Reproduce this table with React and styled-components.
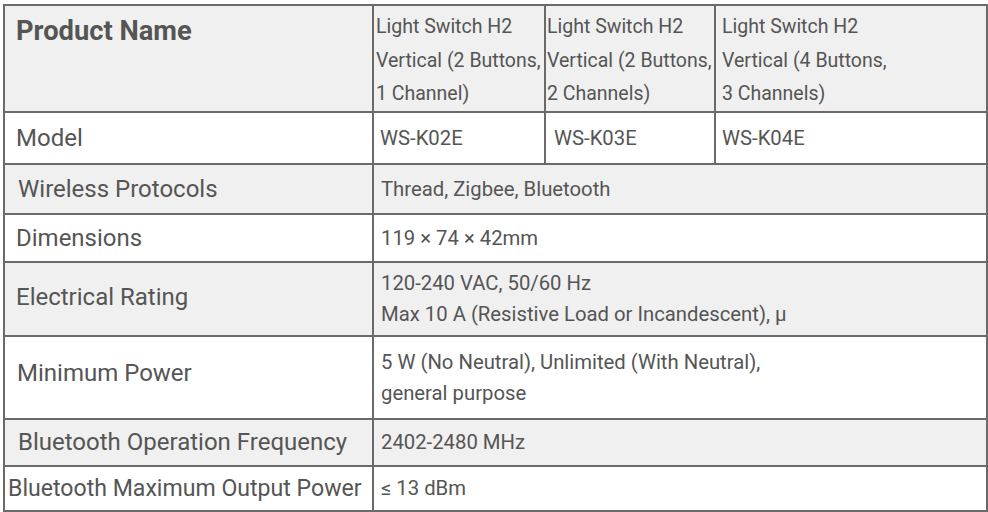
import React from "react";
import styled, { createGlobalStyle } from "styled-components";

const Global = createGlobalStyle`
  html, body { margin: 0; padding: 0; background: #ffffff; }
  body { font-family: "Roboto", "Lato", sans-serif; color: #555555; }
`;

const Page = styled.div`
  padding: 4px 2px 0 3px;
`;

const Table = styled.table`
  width: 983px;
  border-collapse: collapse;
  table-layout: fixed;
  color: #555555;
`;

const Row = styled.tr`
  height: ${(p) => p.$h}px;
  background: ${(p) => (p.$shade ? "#f0f0f0" : "#ffffff")};
`;

const Cell = styled.td`
  border: 2px solid #6a6a6a;
  padding: ${(p) => p.$pt ?? 0}px 0 ${(p) => p.$pb ?? 0}px ${(p) => p.$pl ?? 8}px;
  vertical-align: ${(p) => (p.$top ? "top" : "middle")};
  font-size: ${(p) => p.$fs ?? 20.3}px;
  line-height: ${(p) => p.$lh ?? 31}px;
  font-weight: ${(p) => (p.$bold ? 700 : 400)};
  white-space: nowrap;
`;

const header = [
  { lines: ["Light Switch H2", "Vertical (2 Buttons,", "1 Channel)"], pl: 2 },
  { lines: ["Light Switch H2", "Vertical (2 Buttons,", "2 Channels)"], pl: 1 },
  { lines: ["Light Switch H2", "Vertical (4 Buttons,", "3 Channels)"], pl: 6 },
];

const rows = [
  { label: "Model", h: 52, pl: 11, values: [["WS-K02E", 6], ["WS-K03E", 8], ["WS-K04E", 6]] },
  { label: "Wireless Protocols", h: 50, pl: 13, shade: true, span: ["Thread, Zigbee, Bluetooth", 7] },
  { label: "Dimensions", h: 48, pl: 11, span: ["119 × 74 × 42mm", 7] },
  {
    label: "Electrical Rating", h: 74, pl: 11, lpb: 4, shade: true,
    span: [["120-240 VAC, 50/60 Hz", "Max 10 A (Resistive Load or Incandescent), µ"], 7],
  },
  {
    label: "Minimum Power", h: 83, pl: 12, lpb: 8,
    span: [["5 W (No Neutral), Unlimited (With Neutral),", "general purpose"], 7],
  },
  { label: "Bluetooth Operation Frequency", h: 47, pl: 13, shade: true, span: ["2402-2480 MHz", 7] },
  { label: "Bluetooth Maximum Output Power", h: 45, pl: 3, fs: 23.1, span: ["≤ 13 dBm", 7] },
];

const renderText = (t) =>
  Array.isArray(t)
    ? t.map((line, i) => (
        <React.Fragment key={i}>
          {i > 0 && <br />}
          {line}
        </React.Fragment>
      ))
    : t;

export default function App() {
  return (
    <Page>
      <Global />
      <Table>
        <colgroup>
          <col style={{ width: 369 }} />
          <col style={{ width: 172 }} />
          <col style={{ width: 170 }} />
          <col style={{ width: 272 }} />
        </colgroup>
        <tbody>
          <Row $h={107} $shade>
            <Cell $top $bold $pt={9} $pl={11} $fs={27.3} $lh={32}>Product Name</Cell>
            {header.map((h, i) => (
              <Cell key={i} $top $pt={4} $pl={h.pl} $fs={19.5} $lh={33.5}>
                {renderText(h.lines)}
              </Cell>
            ))}
          </Row>
          {rows.map((r) => (
            <Row key={r.label} $h={r.h} $shade={r.shade}>
              <Cell $pl={r.pl} $pb={r.lpb} $fs={r.fs ?? 24}>{r.label}</Cell>
              {r.values
                ? r.values.map(([v, pl]) => (
                    <Cell key={v} $pl={pl}>{v}</Cell>
                  ))
                : (
                  <Cell colSpan={3} $pl={r.span[1]}>{renderText(r.span[0])}</Cell>
                )}
            </Row>
          ))}
        </tbody>
      </Table>
    </Page>
  );
}
